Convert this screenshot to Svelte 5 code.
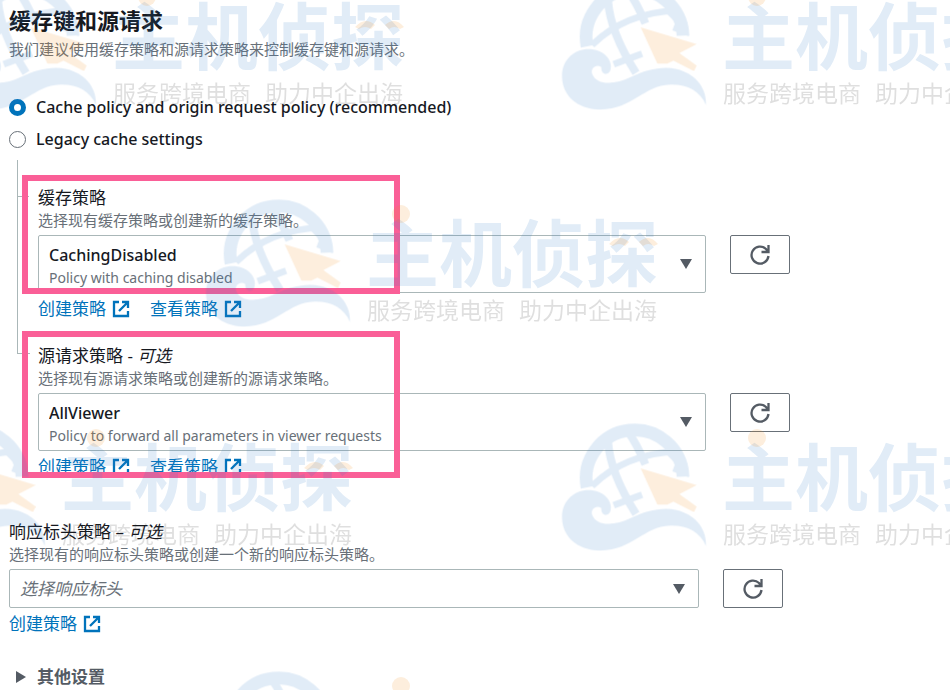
<script>
	const marks = [
		{ x: -48, y: -17 },
		{ x: 562, y: -17 },
		{ x: 206, y: 200 },
		{ x: -99, y: 424 },
		{ x: 562, y: 424 },
		{ x: 206, y: 672 }
	];

	const policies = [
		{
			id: 'cache',
			label: '缓存策略',
			optional: false,
			hint: '选择现有缓存策略或创建新的缓存策略。',
			value: 'CachingDisabled',
			detail: 'Policy with caching disabled'
		},
		{
			id: 'origin',
			label: '源请求策略',
			optional: true,
			hint: '选择现有源请求策略或创建新的源请求策略。',
			value: 'AllViewer',
			detail: 'Policy to forward all parameters in viewer requests'
		}
	];

	let mode = $state('policy');
</script>

{#snippet external(text)}
	<a href="#policy">
		{text}
		<svg class="external" viewBox="0 0 18 18" aria-hidden="true">
			<path d="M7 2H2v14h14v-5M10 2h6v6M16 2L7 11" />
		</svg>
	</a>
{/snippet}

{#snippet refresh()}
	<button class="refresh" type="button" aria-label="refresh">
		<svg viewBox="0 0 20 20" aria-hidden="true">
			<path d="M18.500 11a8.500 8.500 0 1 1-2.500-7l2 2.500M18.500 0v7h-7" />
		</svg>
	</button>
{/snippet}

<main>
	<header>
		<h1>缓存键和源请求</h1>
		<p>我们建议使用缓存策略和源请求策略来控制缓存键和源请求。</p>
	</header>

	<div class="modes">
		<label>
			<input type="radio" name="mode" value="policy" bind:group={mode} />
			Cache policy and origin request policy (recommended)
		</label>
		<label>
			<input type="radio" name="mode" value="legacy" bind:group={mode} />
			Legacy cache settings
		</label>
	</div>

	<div class="tree">
		{#each policies as policy}
			<section class="field {policy.id}">
				<label for={policy.id}>
					{policy.label}{#if policy.optional}&nbsp;- <em>可选</em>{/if}
				</label>
				<p>{policy.hint}</p>
				<div class="row">
					<div class="dropdown">
						<select id={policy.id} class="tall">
							<option>{policy.value}</option>
						</select>
						<span class="detail">{policy.detail}</span>
						<svg class="caret" viewBox="0 0 12 10" aria-hidden="true"><path d="M0 0h12L6 10z" /></svg>
					</div>
					{@render refresh()}
				</div>
				<div class="links">
					{@render external('创建策略')}
					{@render external('查看策略')}
				</div>
				<div class="frame"></div>
			</section>
		{/each}
	</div>

	<section class="field headers">
		<label for="headers">响应标头策略 – <em>可选</em></label>
		<p>选择现有的响应标头策略或创建一个新的响应标头策略。</p>
		<div class="row">
			<div class="dropdown">
				<select id="headers" class="empty">
					<option>选择响应标头</option>
				</select>
				<svg class="caret" viewBox="0 0 12 10" aria-hidden="true"><path d="M0 0h12L6 10z" /></svg>
			</div>
			{@render refresh()}
		</div>
		<div class="links">
			{@render external('创建策略')}
		</div>
	</section>

	<button class="more" type="button">
		<svg viewBox="0 0 10 12" aria-hidden="true"><path d="M0 0l10 6-10 6z" /></svg>
		其他设置
	</button>

	<svg class="watermark" aria-hidden="true">
		<defs>
			<g id="mark">
				<g class="blue">
					<g transform="scale(.3333) translate(-36 -42)">
						<g class="globe">
							<path stroke-width="38" d="M111 232A145.300 145.300 0 1 1 399 200" />
							<path stroke-width="20" d="M126 228C190 165 280 128 385 124" />
							<path stroke-width="24" d="M174 95C180 180 225 260 258 312" />
							<path stroke-width="24" d="M234 65Q262 105 286 163" />
							<path stroke-width="20" d="M191 286L276 254" />
						</g>
						<path d="M382 118L412 160L417 202L367 184L376 160L352 136Z" />
						<path d="M36 320C36 270 75 240 115 240C160 240 188 272 182 300C176 322 152 318 154 294C138 284 120 298 127 316C142 352 200 345 240 325C290 300 340 290 380 300C430 312 470 350 468 408C450 365 410 345 360 347C280 350 250 420 150 422C80 420 36 380 36 320Z" />
					</g>
					<text class="brand" x="160" y="81">主机侦探</text>
				</g>
				<g class="orange">
					<path transform="scale(.3333) translate(-36 -42)" d="M272 175L440 225L388 252L440 290L432 306L370 275L352 284L322 284Z" />
					<circle cx="195" cy="14" r="9" />
					<path d="M403 44Q413 33 423 42L419 46Q413 42 407 46ZM433 42Q443 33 452 44L448 46Q442 42 437 46Z" />
				</g>
				<g class="grey">
					<text x="161" y="119">服务跨境电商</text>
					<text x="313" y="119">助力中企出海</text>
				</g>
			</g>
		</defs>
		{#each marks as mark}
			<use href="#mark" x={mark.x} y={mark.y} />
		{/each}
	</svg>
</main>

<style>
	:global(body) {
		background: #fff;
	}

	main {
		position: relative;
		overflow: hidden;
		box-sizing: border-box;
		min-height: 100vh;
		padding: 8px 160px 0 9px;
		font-family: 'Noto Sans', 'Noto Sans CJK SC', sans-serif;
		font-size: 17px;
		line-height: 24px;
		color: #16191f;
	}

	h1,
	p {
		margin: 0;
	}

	h1 {
		margin-bottom: 7px;
		font-size: 22px;
		line-height: 24px;
		font-weight: 700;
	}

	p {
		font-size: 15px;
		line-height: 20px;
		color: #687078;
	}

	.modes {
		display: grid;
		gap: 8px;
		margin-top: 36px;
	}

	.modes label {
		display: flex;
		align-items: center;
		gap: 10px;
		font-size: 16px;
		font-weight: 500;
	}

	input {
		appearance: none;
		box-sizing: border-box;
		width: 17px;
		height: 17px;
		margin: 0;
		border: 1px solid #687078;
		border-radius: 50%;
		background: #fff;
	}

	input:checked {
		border: 5px solid #0073bb;
	}

	.tree {
		position: relative;
		margin-left: 29px;
		margin-top: 9px;
		padding-top: 26px;
	}

	.tree::before {
		content: '';
		position: absolute;
		left: -21px;
		top: 0;
		width: 12px;
		height: 193px;
		border: solid #aab7b8;
		border-width: 0 0 1px 1px;
	}

	.field {
		position: relative;
	}

	.field label {
		display: block;
	}

	.cache::before {
		content: '';
		position: absolute;
		left: -21px;
		top: 10px;
		width: 12px;
		border-top: 1px solid #aab7b8;
	}

	.origin {
		margin-top: 23px;
	}

	.headers {
		margin: 41px 7px 0 0;
	}

	.row {
		display: flex;
		align-items: flex-start;
		gap: 24px;
		margin-top: 5px;
	}

	.dropdown {
		position: relative;
		flex: 1;
	}

	select {
		appearance: none;
		display: block;
		box-sizing: border-box;
		width: 100%;
		height: 39px;
		padding: 0 40px 0 10px;
		border: 1px solid #aab7b8;
		border-radius: 2px;
		background: #fff;
		font: inherit;
		color: inherit;
	}

	.tall {
		height: 58px;
		padding-bottom: 18px;
		font-size: 16px;
		font-weight: 500;
	}

	.empty {
		font-style: italic;
		color: #687078;
	}

	.detail {
		position: absolute;
		left: 11px;
		bottom: 4px;
		font-size: 14px;
		line-height: 22px;
		color: #687078;
		pointer-events: none;
	}

	.caret {
		position: absolute;
		right: 14px;
		top: calc(50% - 5px);
		width: 12px;
		height: 10px;
		fill: #545b64;
		pointer-events: none;
	}

	.refresh {
		display: flex;
		align-items: center;
		justify-content: center;
		width: 60px;
		height: 39px;
		padding: 0;
		border: 1px solid #687078;
		border-radius: 2px;
		background: #fff;
	}

	.refresh svg {
		width: 20px;
		height: 20px;
		fill: none;
		stroke: #545b64;
		stroke-width: 2.3;
	}

	.links {
		display: flex;
		gap: 20px;
		margin-top: 4px;
	}

	a {
		display: flex;
		align-items: center;
		gap: 6px;
		color: #0073bb;
		text-decoration: none;
	}

	.external {
		width: 18px;
		height: 18px;
		fill: none;
		stroke: #0073bb;
		stroke-width: 2.3;
	}

	.frame {
		position: absolute;
		left: -16px;
		top: -11px;
		box-sizing: border-box;
		width: 378px;
		height: 119px;
		border: 6px solid #fa5f97;
		pointer-events: none;
	}

	.origin .frame {
		top: -13px;
		height: 147px;
	}

	.more {
		display: flex;
		align-items: center;
		gap: 11px;
		margin-top: 29px;
		padding: 0 0 0 7px;
		border: 0;
		background: none;
		font: inherit;
		font-weight: 700;
		color: #545b64;
	}

	.more svg {
		width: 10px;
		height: 12px;
		fill: #545b64;
	}

	.watermark {
		position: absolute;
		inset: 0;
		width: 100%;
		height: 100%;
		pointer-events: none;
	}

	.watermark text {
		font-family: 'Noto Sans CJK SC', sans-serif;
		font-size: 23px;
	}

	.watermark .brand {
		font-size: 73px;
		font-weight: 700;
	}

	.blue {
		fill: #3780ca;
		opacity: 0.15;
	}

	.globe {
		fill: none;
		stroke: #3780ca;
	}

	.orange {
		fill: #f28e1c;
		opacity: 0.15;
	}

	.grey {
		fill: #282828;
		opacity: 0.15;
	}
</style>
